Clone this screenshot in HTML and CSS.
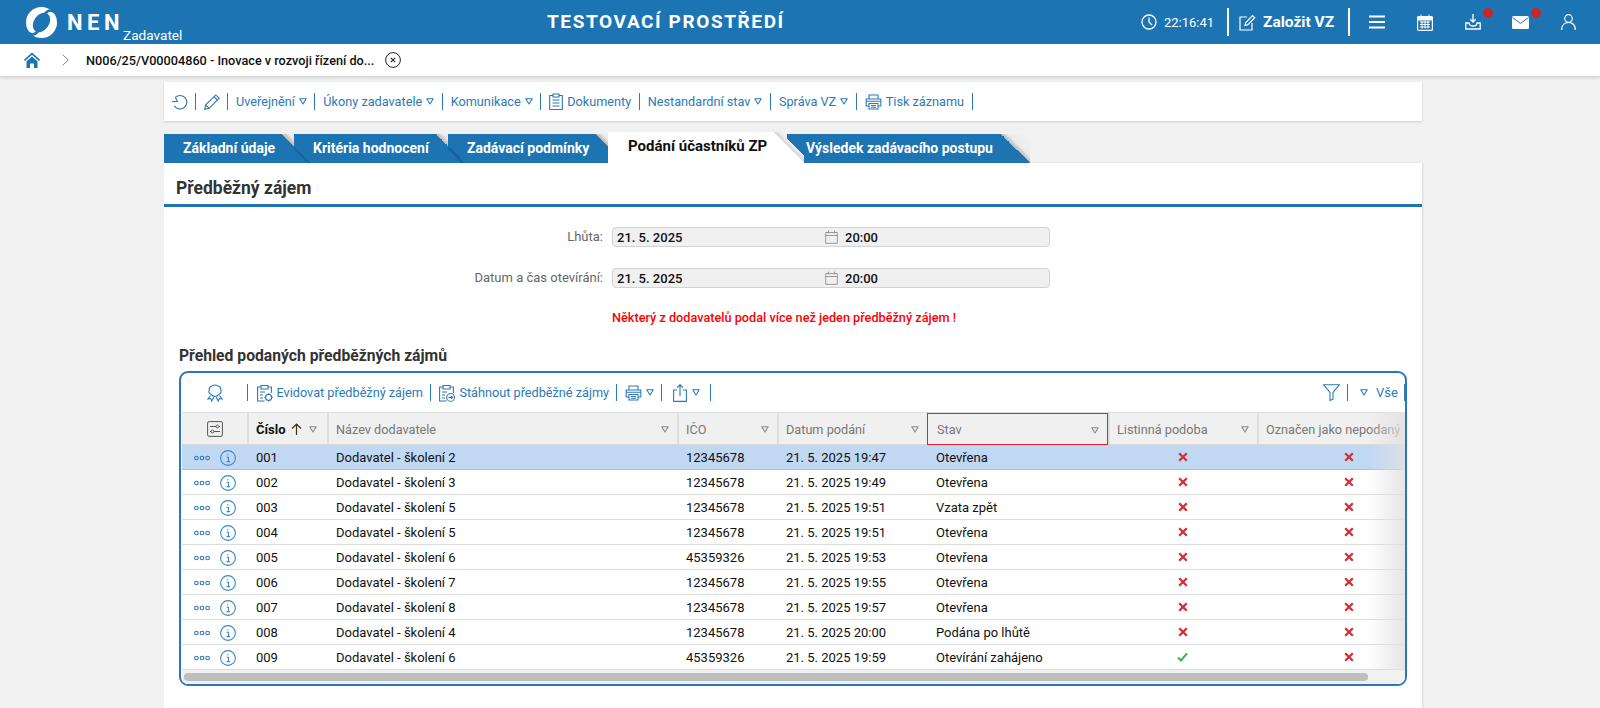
FILE: index.html
```html
<!DOCTYPE html>
<html lang="cs">
<head>
<meta charset="utf-8">
<title>NEN Zadavatel</title>
<link rel="stylesheet" href="styles.css">
</head>
<body>
<svg class="defs" width="0" height="0" aria-hidden="true">
  <symbol id="caret" viewBox="0 0 8 7"><path d="M.8.8h6.400L4 6z" fill="none" stroke="currentColor" stroke-width="1.100" stroke-linejoin="round"/></symbol>
  <symbol id="ooo" viewBox="0 0 16 6"><g fill="none" stroke="#2a7ab5" stroke-width="1.100"><circle cx="2.400" cy="3" r="1.800"/><circle cx="8" cy="3" r="1.800"/><circle cx="13.600" cy="3" r="1.800"/></g></symbol>
  <symbol id="info" viewBox="0 0 16 16"><circle cx="8" cy="8" r="7.400" fill="none" stroke="#3b87bf" stroke-width="1.100"/><path d="M7 4.800h1.300M6.600 7.200h1.900v4.200M6.600 11.600h3.400" fill="none" stroke="#3b87bf" stroke-width="1.100"/></symbol>
  <symbol id="no" viewBox="0 0 10 10"><path d="M1.200 1.200l7.600 7.600M8.800 1.200l-7.600 7.600" stroke="#d32f34" stroke-width="2.300" fill="none"/></symbol>
  <symbol id="yes" viewBox="0 0 11 10"><path d="M1 5.600l3 2.800L10 1.400" stroke="#3cb54a" stroke-width="2.100" fill="none"/></symbol>
  <symbol id="cal" viewBox="0 0 13 14"><path d="M.7 2.500h11.600v10.800H.7zM.7 5.500h11.600M3.500.5v3M9.500.5v3" fill="none" stroke="#9a9a9a"/></symbol>
  <symbol id="printer" viewBox="0 0 17 16"><g fill="none" stroke="#2a7ab5" stroke-width="1.100"><path d="M4 5V1h9v4M4 12H1.200V5h14.600v7H13"/><path d="M4 9.500h9v5.500H4zM6 11.500h5M6 13.300h5M1.200 7.200h14.600"/></g></symbol>
  <symbol id="clip-gear" viewBox="0 0 17 18"><g fill="none" stroke="#2a7ab5" stroke-width="1.100"><path d="M5 3H1.600v14h7M12 3h3.400v6M5 1.500h7V5H5zM4 8h5M4 11h3M4 14h3"/><circle cx="12.600" cy="13.400" r="3"/><path d="M12.600 9.200v1.200M12.600 16.400v1.200M8.400 13.400h1.200M15.600 13.400h1.200"/></g></symbol>
  <symbol id="clip-arrow" viewBox="0 0 17 18"><g fill="none" stroke="#2a7ab5" stroke-width="1.100"><path d="M5 3H1.600v14h7M12 3h3.400v6M5 1.500h7V5H5zM4 8h5M4 11h3M4 14h3"/><circle cx="12.600" cy="13.400" r="3.900"/><path d="M10.600 13.400h4M13.200 12l1.400 1.400-1.400 1.400"/></g></symbol>
</svg>

<header class="topbar">
  <svg class="logo" width="31" height="31" viewBox="0 0 31 31"><circle cx="15.500" cy="15.500" r="15.500" fill="#fff"/><ellipse cx="15.500" cy="15.500" rx="10.600" ry="7.600" transform="rotate(-55 15.500 15.500)" fill="#1c74b3"/><path d="M19 7C23 1 28 4 31 7" stroke="#1c74b3" stroke-width="2.600" fill="none"/><path d="M12 24C8 30 3 27 0 24" stroke="#1c74b3" stroke-width="2.600" fill="none"/></svg>
  <span class="brand">NEN</span>
  <span class="role">Zadavatel</span>
  <h1 class="env">TESTOVACÍ PROSTŘEDÍ</h1>
  <svg class="ico clock" width="16" height="16" viewBox="0 0 16 16"><circle cx="8" cy="8" r="7" fill="none" stroke="#fff" stroke-width="1.300"/><path d="M8 3.600V8l3 3" fill="none" stroke="#fff" stroke-width="1.300"/></svg>
  <span class="time">22:16:41</span>
  <span class="top-sep first"></span>
  <svg class="ico found" width="17" height="17" viewBox="0 0 17 17"><path d="M8 3H1v13h12V9" fill="none" stroke="#fff" stroke-width="1.200"/><path d="M6 11.500l.8-3L13.500 1.500l2.200 2.200-6.800 7z" fill="none" stroke="#fff" stroke-width="1.200"/></svg>
  <span class="found-text">Založit VZ</span>
  <span class="top-sep"></span>
  <svg class="ico menu" width="16" height="14" viewBox="0 0 16 14"><path d="M0 1.500h16M0 7h16M0 12.500h16" stroke="#fff" stroke-width="2"/></svg>
  <svg class="ico calendar" width="16" height="17" viewBox="0 0 16 17"><rect x=".6" y="2.600" width="14.800" height="13.800" rx="1" fill="none" stroke="#fff" stroke-width="1.200"/><path d="M.6 3h14.800v3H.6zM4 .5v3M12 .5v3" fill="#fff" stroke="#fff"/><path d="M3 8h10M3 10.500h10M3 13h10M5 7v7.500M8 7v7.500M11 7v7.500" stroke="#fff"/></svg>
  <span class="notif dl"><svg width="16" height="16" viewBox="0 0 16 16"><path d="M8 0v7.500M5.300 5.300L8 8l2.700-2.700" fill="none" stroke="#fff" stroke-width="1.300"/><path d="M4 9H.8v6h14.400V9H12c0 4-8 4-8 0z" fill="none" stroke="#fff" stroke-width="1.300"/></svg><i class="dot"></i></span>
  <span class="notif mail"><svg width="17" height="13" viewBox="0 0 17 13"><rect width="17" height="13" rx="1.500" fill="#fff"/><path d="M.5 1.500l8 6 8-6" fill="none" stroke="#1c74b3" stroke-width="1"/></svg><i class="dot"></i></span>
  <svg class="ico user" width="15" height="16" viewBox="0 0 15 16"><circle cx="7.500" cy="4.500" r="3.800" fill="none" stroke="#fff" stroke-width="1.200"/><path d="M.7 16c0-5 3-7.500 6.800-7.500s6.800 2.500 6.800 7.500" fill="none" stroke="#fff" stroke-width="1.200"/></svg>
</header>

<nav class="crumbs">
  <svg class="home" width="16" height="16" viewBox="0 0 16 16"><path d="M8 .5L0 7.800l1 1.200L8 2.800 15 9l1-1.200z" fill="#1c74b3"/><path d="M2.500 9.300L8 4.500l5.500 4.800V16h-3.500v-4.500H6V16H2.500z" fill="#1c74b3"/></svg>
  <svg class="chev" width="7" height="12" viewBox="0 0 7 12"><path d="M.6.6L6.300 6 .6 11.400" fill="none" stroke="#888"/></svg>
  <span class="crumb-text">N006/25/V00004860 - Inovace v rozvoji řízení do...</span>
  <svg class="crumb-x" width="16" height="16" viewBox="0 0 16 16"><circle cx="8" cy="8" r="7.400" fill="none" stroke="#222" stroke-width="1"/><path d="M5.800 5.800l4.400 4.400M10.200 5.800l-4.400 4.400" stroke="#222" stroke-width="1.100"/></svg>
</nav>

<main class="main">
  <div class="actions">
    <svg class="act-ico first" width="16" height="16" viewBox="0 0 16 16"><path d="M3.300 3.300A6.800 6.800 0 1 1 2.200 11.800" fill="none" stroke="#2a7ab5" stroke-width="1.100"/><path d="M0 7.500h5.500L3.300 3.300" fill="none" stroke="#2a7ab5" stroke-width="1.100"/></svg>
    <span class="sep"></span>
    <svg class="act-ico" width="16" height="16" viewBox="0 0 16 16"><path d="M.7 15.300l1-4.500L11.800.9l3.300 3.300L5.200 14.300zM1.700 10.800l3.500 3.500M10 2.700l3.300 3.300" fill="none" stroke="#2a7ab5" stroke-width="1.100"/></svg>
    <span class="sep"></span>
    <a class="act">Uveřejnění <svg class="car" width="8" height="7"><use href="#caret"/></svg></a><span class="sep"></span>
    <a class="act">Úkony zadavatele <svg class="car" width="8" height="7"><use href="#caret"/></svg></a><span class="sep"></span>
    <a class="act">Komunikace <svg class="car" width="8" height="7"><use href="#caret"/></svg></a><span class="sep"></span>
    <a class="act"><svg width="14" height="17" viewBox="0 0 14 17"><path d="M4 2.500H.7v14h12.600v-14H10M4 1h6v3H4zM3.500 7h7M3.500 10h7M3.500 13h7" fill="none" stroke="#2a7ab5" stroke-width="1.100"/></svg> Dokumenty</a><span class="sep"></span>
    <a class="act">Nestandardní stav <svg class="car" width="8" height="7"><use href="#caret"/></svg></a><span class="sep"></span>
    <a class="act">Správa VZ <svg class="car" width="8" height="7"><use href="#caret"/></svg></a><span class="sep"></span>
    <a class="act"><svg width="17" height="16"><use href="#printer"/></svg> Tisk záznamu</a><span class="sep"></span>
  </div>

  <div class="tabs">
    <a class="tab t1"><span class="tab-label">Základní údaje</span></a>
    <a class="tab t2"><span class="tab-label">Kritéria hodnocení</span></a>
    <a class="tab t3"><span class="tab-label">Zadávací podmínky</span></a>
    <a class="tab active"><span class="tab-label">Podání účastníků ZP</span></a>
    <a class="tab t5"><span class="tab-label">Výsledek zadávacího postupu</span></a>
  </div>

  <section class="panel">
    <h2 class="panel-title">Předběžný zájem</h2>
    <div class="field">
      <label class="field-label">Lhůta:</label>
      <div class="field-box"><span class="f-date">21. 5. 2025</span><svg width="13" height="14"><use href="#cal"/></svg><span class="f-time">20:00</span></div>
    </div>
    <div class="field">
      <label class="field-label">Datum a čas otevírání:</label>
      <div class="field-box"><span class="f-date">21. 5. 2025</span><svg width="13" height="14"><use href="#cal"/></svg><span class="f-time">20:00</span></div>
    </div>
    <p class="warn">Některý z dodavatelů podal více než jeden předběžný zájem !</p>
    <h3 class="sub-title">Přehled podaných předběžných zájmů</h3>

    <div class="frame">
      <div class="grid-tools">
        <svg class="award" width="16" height="18" viewBox="0 0 16 18"><g fill="none" stroke="#2a7ab5" stroke-width="1.100"><path d="M8 1c2 0 2.500 1 3.500 1.200 1.500.4 2.500 1.500 2.300 3.300-.1 1 .6 1.800.1 3-.6 1.500-2 1.800-3 2.800-1 .8-1.800 1.200-2.900 1.200s-1.900-.4-2.900-1.200c-1-1-2.400-1.300-3-2.800-.5-1.200.2-2 .1-3C2 3.700 3 2.600 4.500 2.200 5.500 2 6 1 8 1z"/><path d="M3.500 11.500L1 15l2.800-.5 1 2.500 2-3.700M12.500 11.500L15 15l-2.800-.5-1 2.500-2-3.700"/></g></svg>
        <span class="sep"></span>
        <a class="act"><svg width="17" height="18"><use href="#clip-gear"/></svg> Evidovat předběžný zájem</a><span class="sep"></span>
        <a class="act"><svg width="17" height="18"><use href="#clip-arrow"/></svg> Stáhnout předběžné zájmy</a><span class="sep"></span>
        <a class="act"><svg width="17" height="16"><use href="#printer"/></svg> <svg class="car" width="8" height="7"><use href="#caret"/></svg></a><span class="sep"></span>
        <a class="act share"><svg width="14" height="18" viewBox="0 0 14 18"><path d="M4 6H.6v11.400h12.800V6H10M7 12V1M4 3.500L7 .8l3 2.700" fill="none" stroke="#2a7ab5" stroke-width="1.100"/></svg> <svg class="car" width="8" height="7"><use href="#caret"/></svg></a><span class="sep"></span>
        <span class="spacer"></span>
        <svg class="funnel" width="17" height="17" viewBox="0 0 17 17"><path d="M.6.8h15.800L10 8.500v6.700l-3 1.300v-8z" fill="none" stroke="#2a7ab5" stroke-width="1.100"/></svg>
        <span class="sep"></span>
        <a class="act all"><svg class="car" width="8" height="7"><use href="#caret"/></svg> <span class="all-text">Vše</span></a><span class="sep"></span>
      </div>

      <div class="row head">
        <div class="c c0"><svg width="16" height="16" viewBox="0 0 16 16"><rect x=".6" y=".6" width="14.800" height="14.800" rx="1.500" fill="none" stroke="#555"/><path d="M3 5.500h6M12 5.500h1M3 10.500h1M7 10.500h6" stroke="#555"/><circle cx="10.300" cy="5.500" r="1.400" fill="none" stroke="#555"/><circle cx="5.500" cy="10.500" r="1.400" fill="none" stroke="#555"/></svg></div>
        <div class="c c1"><b>Číslo</b><svg class="sort" width="11" height="12" viewBox="0 0 11 12"><path d="M5.500 12V1M1 5.500L5.500 1 10 5.500" fill="none" stroke="#3a3020" stroke-width="1.200"/></svg><svg class="hcar" width="8" height="7"><use href="#caret"/></svg></div>
        <div class="c c2">Název dodavatele<svg class="hcar end" width="8" height="7"><use href="#caret"/></svg></div>
        <div class="c c3">IČO<svg class="hcar end" width="8" height="7"><use href="#caret"/></svg></div>
        <div class="c c4">Datum podání<svg class="hcar end" width="8" height="7"><use href="#caret"/></svg></div>
        <div class="c c5 marked">Stav<svg class="hcar end" width="8" height="7"><use href="#caret"/></svg></div>
        <div class="c c6">Listinná podoba<svg class="hcar end" width="8" height="7"><use href="#caret"/></svg></div>
        <div class="c c7">Označen jako nepodaný</div>
      </div>

      <div class="row sel"><div class="c c0"><svg width="16" height="6"><use href="#ooo"/></svg><svg width="16" height="16"><use href="#info"/></svg></div><div class="c c1">001</div><div class="c c2">Dodavatel - školení 2</div><div class="c c3">12345678</div><div class="c c4">21. 5. 2025 19:47</div><div class="c c5">Otevřena</div><div class="c c6 m"><svg width="10" height="10"><use href="#no"/></svg></div><div class="c c7 m"><svg width="10" height="10"><use href="#no"/></svg></div></div>
      <div class="row"><div class="c c0"><svg width="16" height="6"><use href="#ooo"/></svg><svg width="16" height="16"><use href="#info"/></svg></div><div class="c c1">002</div><div class="c c2">Dodavatel - školení 3</div><div class="c c3">12345678</div><div class="c c4">21. 5. 2025 19:49</div><div class="c c5">Otevřena</div><div class="c c6 m"><svg width="10" height="10"><use href="#no"/></svg></div><div class="c c7 m"><svg width="10" height="10"><use href="#no"/></svg></div></div>
      <div class="row"><div class="c c0"><svg width="16" height="6"><use href="#ooo"/></svg><svg width="16" height="16"><use href="#info"/></svg></div><div class="c c1">003</div><div class="c c2">Dodavatel - školení 5</div><div class="c c3">12345678</div><div class="c c4">21. 5. 2025 19:51</div><div class="c c5">Vzata zpět</div><div class="c c6 m"><svg width="10" height="10"><use href="#no"/></svg></div><div class="c c7 m"><svg width="10" height="10"><use href="#no"/></svg></div></div>
      <div class="row"><div class="c c0"><svg width="16" height="6"><use href="#ooo"/></svg><svg width="16" height="16"><use href="#info"/></svg></div><div class="c c1">004</div><div class="c c2">Dodavatel - školení 5</div><div class="c c3">12345678</div><div class="c c4">21. 5. 2025 19:51</div><div class="c c5">Otevřena</div><div class="c c6 m"><svg width="10" height="10"><use href="#no"/></svg></div><div class="c c7 m"><svg width="10" height="10"><use href="#no"/></svg></div></div>
      <div class="row"><div class="c c0"><svg width="16" height="6"><use href="#ooo"/></svg><svg width="16" height="16"><use href="#info"/></svg></div><div class="c c1">005</div><div class="c c2">Dodavatel - školení 6</div><div class="c c3">45359326</div><div class="c c4">21. 5. 2025 19:53</div><div class="c c5">Otevřena</div><div class="c c6 m"><svg width="10" height="10"><use href="#no"/></svg></div><div class="c c7 m"><svg width="10" height="10"><use href="#no"/></svg></div></div>
      <div class="row"><div class="c c0"><svg width="16" height="6"><use href="#ooo"/></svg><svg width="16" height="16"><use href="#info"/></svg></div><div class="c c1">006</div><div class="c c2">Dodavatel - školení 7</div><div class="c c3">12345678</div><div class="c c4">21. 5. 2025 19:55</div><div class="c c5">Otevřena</div><div class="c c6 m"><svg width="10" height="10"><use href="#no"/></svg></div><div class="c c7 m"><svg width="10" height="10"><use href="#no"/></svg></div></div>
      <div class="row"><div class="c c0"><svg width="16" height="6"><use href="#ooo"/></svg><svg width="16" height="16"><use href="#info"/></svg></div><div class="c c1">007</div><div class="c c2">Dodavatel - školení 8</div><div class="c c3">12345678</div><div class="c c4">21. 5. 2025 19:57</div><div class="c c5">Otevřena</div><div class="c c6 m"><svg width="10" height="10"><use href="#no"/></svg></div><div class="c c7 m"><svg width="10" height="10"><use href="#no"/></svg></div></div>
      <div class="row"><div class="c c0"><svg width="16" height="6"><use href="#ooo"/></svg><svg width="16" height="16"><use href="#info"/></svg></div><div class="c c1">008</div><div class="c c2">Dodavatel - školení 4</div><div class="c c3">12345678</div><div class="c c4">21. 5. 2025 20:00</div><div class="c c5">Podána po lhůtě</div><div class="c c6 m"><svg width="10" height="10"><use href="#no"/></svg></div><div class="c c7 m"><svg width="10" height="10"><use href="#no"/></svg></div></div>
      <div class="row"><div class="c c0"><svg width="16" height="6"><use href="#ooo"/></svg><svg width="16" height="16"><use href="#info"/></svg></div><div class="c c1">009</div><div class="c c2">Dodavatel - školení 6</div><div class="c c3">45359326</div><div class="c c4">21. 5. 2025 19:59</div><div class="c c5">Otevírání zahájeno</div><div class="c c6 m"><svg width="11" height="10"><use href="#yes"/></svg></div><div class="c c7 m"><svg width="10" height="10"><use href="#no"/></svg></div></div>

      <div class="hscroll"><div class="thumb"></div></div>
      <div class="fade"></div>
    </div>
  </section>
</main>
</body>
</html>
```

FILE: styles.css
```css
* { box-sizing: border-box; }
html, body { margin: 0; height: 100%; }
body {
  display: flex;
  flex-direction: column;
  height: 708px;
  overflow: hidden;
  background: #f1f1f1;
  font-family: Roboto, "Liberation Sans", sans-serif;
  font-size: 13px;
  color: #111;
}
.defs { position: absolute; }
svg { display: block; flex: none; }

/* top bar */
.topbar {
  height: 44px;
  flex: none;
  display: flex;
  align-items: center;
  background: #1c74b3;
  color: #fff;
  padding-left: 26px;
}
.brand { margin-left: 10px; font-size: 22px; font-weight: 700; letter-spacing: 4.600px; width: 56px; }
.role { align-self: flex-end; font-size: 13.600px; line-height: 18px; width: 60px; }
.env { margin: 0 0 0 364px; width: 594px; font-size: 19px; font-weight: 700; letter-spacing: 1.600px; line-height: 22px; }
.time { margin-left: 7px; font-size: 13px; width: 51px; }
.top-sep { width: 2px; height: 28px; background: #fff; }
.top-sep.first { margin-left: 12px; }
.found { margin-left: 10px; }
.found-text { margin-left: 7px; font-size: 15.500px; font-weight: 700; width: 85px; white-space: nowrap; }
.menu { margin-left: 19px; }
.calendar { margin-left: 32px; }
.notif { position: relative; display: block; }
.notif.dl { margin-left: 32px; }
.notif.mail { margin-left: 31px; }
.dot { position: absolute; width: 10px; height: 10px; border-radius: 50%; background: #c62828; top: -6px; right: -12px; }
.notif.mail .dot { top: -8px; right: -12px; }
.user { margin-left: 32px; }

/* breadcrumb */
.crumbs {
  height: 32px;
  flex: none;
  display: flex;
  align-items: center;
  background: #fff;
  padding-left: 24px;
  box-shadow: 0 2px 3px rgba(0,0,0,.12);
  position: relative;
}
.chev { margin-left: 22px; }
.crumb-text { margin-left: 17px; font-weight: 500; font-size: 12.700px; width: 299px; white-space: nowrap; color: #111; }

/* main column */
.main {
  flex: 1;
  min-height: 0;
  width: 1258px;
  margin-left: 164px;
  padding-top: 6px;
  display: flex;
  flex-direction: column;
}
.actions {
  flex: none;
  height: 39px;
  display: flex;
  align-items: center;
  background: #fff;
  padding-left: 8px;
  box-shadow: 0 1px 2px rgba(0,0,0,.15);
}
.sep { flex: none; width: 1px; height: 17px; background: #2a7ab5; }
.act-ico { margin-right: 7px; margin-left: 8px; }
.act-ico.first { margin-left: 0; }
.act {
  display: flex;
  align-items: center;
  gap: 4px;
  padding: 0 7.500px 0 8px;
  font-size: 12.700px;
  color: #2a7ab5;
  white-space: nowrap;
}
.car { color: #2a7ab5; }

/* tabs */
.tabs { flex: none; height: 31px; margin-top: 11px; display: flex; align-items: flex-end; }
.tab {
  position: relative;
  height: 29px;
  display: flex;
  color: #fff;
  font-weight: 700;
  font-size: 14px;
  white-space: nowrap;
}
.tab-label { background: #1c74b3; line-height: 29px; padding-left: 19px; }
.tab::after {
  content: "";
  width: 29px;
  height: 29px;
  background: linear-gradient(to top right, #1c74b3 50%, #b9b9b9 50%, #ececec 62%, #f1f1f1 100%);
}
.t1 { z-index: 1; }
.t1 .tab-label { width: 118px; }
.t2 { z-index: 2; margin-left: -17px; }
.t2 .tab-label { width: 142px; }
.t3 { z-index: 3; margin-left: -17px; }
.t3 .tab-label { width: 148px; }
.t2::before, .t3::before {
  content: "";
  position: absolute;
  left: 0;
  bottom: 0;
  width: 17px;
  height: 17px;
  background: linear-gradient(to top right, #1c74b3 36%, #155a8e 50%, transparent 50%);
  z-index: 1;
}
.tab.active { z-index: 5; height: 31px; color: #111; margin-left: -17px; font-size: 15px; }
.active .tab-label { background: #fff; line-height: 29px; width: 165px; padding-left: 20px; }
.active::after {
  width: 31px;
  height: 31px;
  background: linear-gradient(to top right, #fff 50%, #d6d6d6 50%, #efefef 62%, transparent 62%);
}
.t5 { z-index: 4; margin-left: -17px; }
.t5 .tab-label { width: 214px; }

/* panel */
.panel {
  flex: 1;
  min-height: 0;
  background: #fff;
  box-shadow: 1px 0 2px rgba(0,0,0,.1);
  display: flex;
  flex-direction: column;
}
.panel-title {
  flex: none;
  margin: 0 0 20px;
  height: 44px;
  border-bottom: 3px solid #1c74b3;
  padding: 14px 0 0 12px;
  font-size: 17.500px;
  line-height: 22px;
  font-weight: 700;
  color: #333;
}
.field { flex: none; display: flex; align-items: center; height: 20px; margin-bottom: 21px; }
.field-label { width: 439px; text-align: right; color: #666; font-size: 13px; padding-bottom: 2px; }
.field-box {
  margin-left: 9px;
  width: 438px;
  height: 20px;
  display: flex;
  align-items: center;
  background: #f0f0f0;
  border: 1px solid #d2d2d2;
  border-radius: 4px;
  padding-left: 4px;
  font-weight: 500;
  color: #111;
}
.f-date { width: 208px; }
.f-time { margin-left: 7px; }
.warn { flex: none; margin: 1px 0 0 448px; height: 16px; line-height: 16px; color: #f00; font-weight: 500; font-size: 12.700px; }
.sub-title { flex: none; margin: 21px 0 0 15px; height: 24px; line-height: 18px; font-size: 15.700px; font-weight: 700; color: #333; }

/* data grid */
.frame {
  position: relative;
  flex: none;
  width: 1228px;
  height: 315px;
  margin-left: 15px;
  border: 2px solid #2a78b5;
  border-radius: 9px;
  background: #fff;
  padding-left: 1px;
  overflow: hidden;
}
.grid-tools { height: 39px; display: flex; align-items: center; padding-left: 25px; }
.grid-tools .act { padding: 0 7px 0 7.500px; }
.grid-tools .act.share { padding: 0 10px 0 11px; gap: 5px; }
.award { margin-right: 24px; }
.spacer { flex: 1; }
.funnel { margin-right: 7px; }
.grid-tools .act.all { padding: 0 7px 0 12px; gap: 8px; font-size: 13px; }
.all-text { width: 21px; }
.row { display: flex; height: 25px; border-bottom: 1px solid #dcdcdc; }
.row.head { height: 33px; background: #f0f0f0; border-top: 1px solid #dfdfdf; border-bottom: 1px solid #d8d8d8; color: #777; font-size: 12.700px; }
.row.sel { background: #c1d8f3; border-bottom-color: #9cc3ea; }
.c { display: flex; align-items: center; padding: 1px 0 0 9px; white-space: nowrap; position: relative; }
.head .c { border-left: 2px solid #dedede; padding-left: 7px; }
.head b { color: #111; font-weight: 700; font-size: 13px; }
.c0 { width: 65px; padding-left: 12px; gap: 10px; }
.head .c0 { padding-left: 25px; border-left: 0; }
.c1 { width: 80px; }
.c2 { width: 350px; }
.c3 { width: 100px; }
.c4 { width: 150px; }
.c5 { width: 181px; }
.c6 { width: 149px; }
.c7 { width: 147px; }
.m { padding: 0 0 1px; justify-content: center; }
.c7.m { padding-left: 36px; }
.sort { margin-left: 5px; }
.hcar { color: #888; margin-left: 7px; }
.hcar.end { position: absolute; right: 8px; top: 13px; margin: 0; }
.head .marked { border: 1px solid #e2202c; margin-bottom: -1px; padding-left: 9px; }
.hscroll { height: 14px; background: #f1f1f1; padding: 3px 0 0 2px; }
.thumb { width: 1184px; height: 8px; background: #bdbdbd; border-radius: 4px; }
.fade {
  position: absolute;
  top: 39px;
  right: 0;
  bottom: 14px;
  width: 38px;
  background: linear-gradient(to right, rgba(225,225,225,0), rgba(225,225,225,.85));
}
```
